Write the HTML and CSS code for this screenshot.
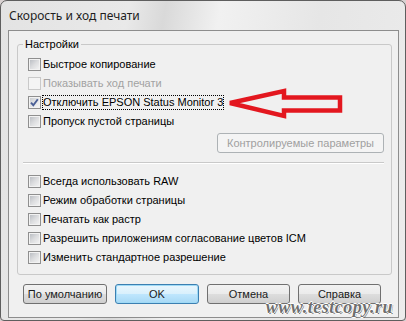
FILE: index.html
```html
<!DOCTYPE html>
<html lang="ru">
<head>
    <meta charset="UTF-8">
    <meta name="viewport" content="width=device-width, initial-scale=1.0">
    <title>Скорость и ход печати</title>
    <link rel="stylesheet" href="styles.css">
</head>
<body>
    <div class="window">
        <div class="title">Скорость и ход печати</div>
        <div class="dialog">
            <fieldset class="group">
                <legend>Настройки</legend>
                <div class="list first">
                    <div class="row"><span class="box"></span><span class="label">Быстрое копирование</span></div>
                    <div class="row disabled"><span class="box"></span><span class="label">Показывать ход печати</span></div>
                    <div class="row"><span class="box checked"><svg width="11" height="11" viewBox="0 0 11 11"><path d="M2 5.6 L4.3 8.2 L8.8 2.2" fill="none" stroke="#4a5f96" stroke-width="1.9"/></svg></span><span class="label focus">Отключить EPSON Status Monitor 3</span></div>
                    <div class="row"><span class="box"></span><span class="label">Пропуск пустой страницы</span></div>
                </div>
                <div class="group-actions">
                    <button class="btn" disabled>Контролируемые параметры</button>
                </div>
                <div class="separator"></div>
                <div class="list">
                    <div class="row"><span class="box"></span><span class="label">Всегда использовать RAW</span></div>
                    <div class="row"><span class="box"></span><span class="label">Режим обработки страницы</span></div>
                    <div class="row"><span class="box"></span><span class="label">Печатать как растр</span></div>
                    <div class="row"><span class="box"></span><span class="label">Разрешить приложениям согласование цветов ICM</span></div>
                    <div class="row"><span class="box"></span><span class="label">Изменить стандартное разрешение</span></div>
                </div>
            </fieldset>
            <div class="buttons">
                <button class="btn wide">По умолчанию</button>
                <button class="btn wide default">OK</button>
                <button class="btn">Отмена</button>
                <button class="btn">Справка</button>
            </div>
        </div>

        <svg class="arrow" width="126" height="42" viewBox="0 0 126 42">
            <polygon points="8,19 62,7 62,13.5 118,13.5 118,26.5 62,26.5 62,32" fill="none" stroke="#e3171f" stroke-width="4.5" stroke-linejoin="miter"/>
        </svg>
        <div class="watermark">www.testcopy.ru</div>
    </div>
</body>
</html>
```

FILE: styles.css
```css
body {
    margin: 0;
    padding: 0;
    background: #d9d2d2;
    font-family: "Liberation Sans", Arial, sans-serif;
    font-size: 11px;
    color: #000;
}
.window {
    position: relative;
    width: 406px;
    height: 321px;
    box-sizing: border-box;
    border: 1px solid #5e5e5e;
    border-radius: 7px 7px 4px 4px;
    padding: 0 6px 2px 7px;
    background: linear-gradient(100deg, #e3e3e3 0%, #e9e9e9 28%, #d9d9d9 36%, #f1f1f1 48%, #e6e6e6 70%, #ececec 100%);
    display: flex;
    flex-direction: column;
}
.title {
    height: 29px;
    line-height: 29px;
    padding-left: 1px;
    font-family: "Noto Sans", "Open Sans", sans-serif;
    font-size: 12px;
    color: #1e1e1e;
}
.dialog {
    flex: 1;
    border: 1px solid #8d8d8d;
    background: #f0f0f0;
    display: flex;
    flex-direction: column;
}
.group {
    margin: 7px 6px 0 8px;
    padding: 0 7px 7px 10px;
    border: 1px solid #c9c9c9;
    border-radius: 3px;
    min-width: 0;
}
.group legend {
    margin-left: -5px;
    padding: 0 2px;
    line-height: 13px;
}
.list {
    margin-top: 8px;
}
.list.first {
    margin-top: 4px;
}
.row {
    height: 19px;
    display: flex;
    align-items: center;
}
.box {
    width: 13px;
    height: 13px;
    box-sizing: border-box;
    border: 1px solid #8f8f8f;
    background: linear-gradient(135deg, #b4b8be 0%, #dcdddf 50%, #f6f6f6 100%);
    box-shadow: inset 0 0 0 1px #f2f2f2;
    margin-right: 1px;
    display: flex;
    align-items: center;
    justify-content: center;
}
.box.checked {
    background: linear-gradient(135deg, #c3c7cc 0%, #e4e5e7 50%, #f8f8f8 100%);
}
.row.disabled .box {
    border-color: #c9c9c9;
    background: #f4f4f4;
    box-shadow: none;
}
.row.disabled .label {
    color: #a2a2a2;
}
.label {
    border: 1px dotted transparent;
    line-height: 13px;
    white-space: nowrap;
}
.label.focus {
    border-color: #000;
}
.group-actions {
    display: flex;
    justify-content: flex-end;
    margin-top: 2px;
}
.btn {
    height: 20px;
    width: 83px;
    box-sizing: border-box;
    border: 1px solid #707070;
    border-radius: 3px;
    background: linear-gradient(#f2f2f2 0%, #ebebeb 48%, #dddddd 52%, #cfcfcf 100%);
    font-family: inherit;
    font-size: 11px;
    font-weight: normal;
    color: #1a1a1a;
    padding: 0 0 1px;
}
.group-actions .btn {
    width: 167px;
    border-color: #adb2b5;
    background: #f4f4f4;
    color: #a0a0a0;
}
.separator {
    margin: 9px 0 0 -5px;
    border-top: 1px solid #c9c9c9;
    border-bottom: 1px solid #fff;
}
.buttons {
    display: flex;
    gap: 8px;
    margin: 9px 0 0 14px;
}
.btn.wide {
    width: 84px;
}
.btn.default {
    border-color: #3c7fb1;
    box-shadow: inset 0 0 0 1px #9fdaf6;
    background: linear-gradient(#eaf6fd 0%, #d9f0fc 48%, #bee6fd 52%, #a7d9f5 100%);
}
.arrow {
    position: absolute;
    left: 221px;
    top: 83px;
}
.watermark {
    position: absolute;
    right: 12px;
    top: 299px;
    line-height: 14px;
    font-family: "Liberation Serif", serif;
    font-weight: bold;
    font-style: italic;
    font-size: 18px;
    letter-spacing: 0.5px;
    color: #6f6f6f;
    text-shadow: 1px 0 #fff, -1px 0 #fff, 0 1px #fff, 0 -1px #fff, 1px 1px #444;
}
```
